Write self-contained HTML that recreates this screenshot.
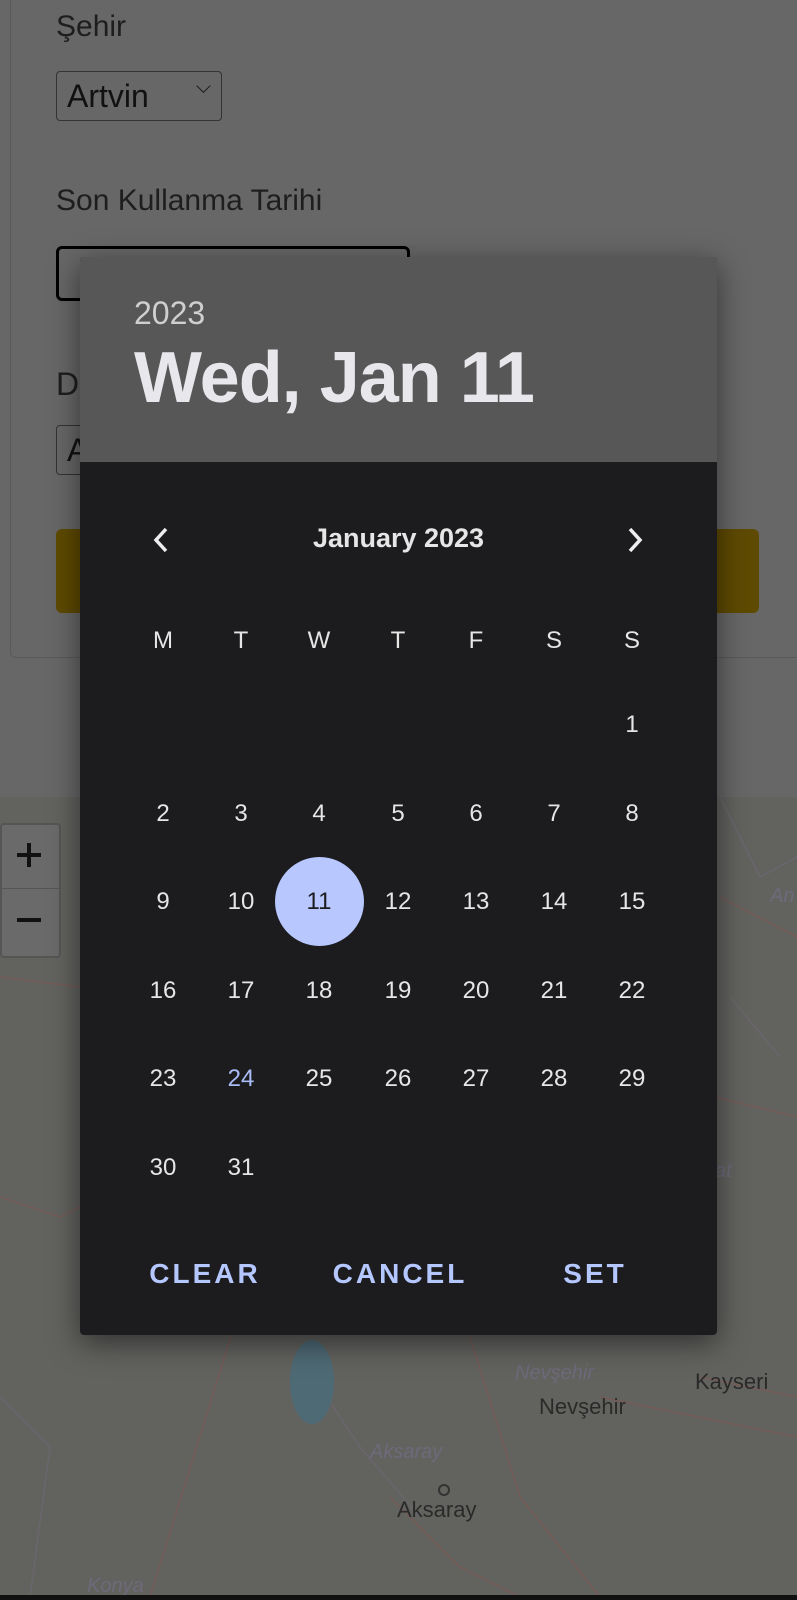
<!DOCTYPE html>
<html><head><meta charset="utf-8"><style>
*{margin:0;padding:0;box-sizing:border-box}
body{width:797px;height:1600px;overflow:hidden;background:#676767;font-family:"Liberation Sans",sans-serif;position:relative}
.a{position:absolute}
.t{color:#1e1e1e;font-size:30px}
.map{left:0;top:797px;width:797px;height:800px;background:#62625f;overflow:hidden}
.dlg{left:80px;top:257px;width:637px;height:1078px;background:#1c1c1e;border-radius:4px;box-shadow:0 8px 30px rgba(0,0,0,.5);overflow:hidden}
.hd{left:0;top:0;width:637px;height:205px;background:#575757}
.c{position:absolute;width:60px;margin-left:-30px;text-align:center;color:#e6e6e6;font-size:24px;margin-top:2px}
.btn{position:absolute;color:#b5c7ff;font-size:28px;font-weight:bold;letter-spacing:3px;transform:translateX(-50%)}
</style></head><body>
<div class="a" style="left:10px;top:-10px;width:800px;height:668px;border:1px solid #5a5a5a;border-radius:6px"></div>
<div class="a t" style="left:56px;top:10px">Şehir</div>
<div class="a" style="left:56px;top:71px;width:166px;height:50px;border:1.5px solid #333;border-radius:4px;font-size:32px;color:#111;padding:6px 10px">Artvin<span style="position:absolute;right:10px;top:4px;font-size:20px">⌵</span></div>
<div class="a t" style="left:56px;top:184px">Son Kullanma Tarihi</div>
<div class="a" style="left:56px;top:246px;width:354px;height:55px;border:3px solid #000;border-radius:6px"></div>
<div class="a t" style="left:56px;top:366px;font-size:32px">D</div>
<div class="a" style="left:56px;top:425px;width:60px;height:50px;border:1.5px solid #333;border-radius:4px;font-size:32px;color:#111;padding:6px 10px">A</div>
<div class="a" style="left:56px;top:529px;width:703px;height:84px;background:#5e4a00;border-radius:6px"></div>
<div class="a map">
<svg width="797" height="800" style="position:absolute;left:0;top:0">
<g fill="none" stroke="#7a5a55" stroke-width="1.5" opacity=".8">
<path d="M0 180 L80 190 L150 230 M0 400 L60 420 L120 390 M720 100 L797 140 M715 300 L797 320 M240 510 L150 800 M390 700 L460 770 L520 800 M470 540 L520 700 L600 800 M700 580 L797 600 M600 600 L797 640"/>
<path d="M720 0 L760 80 L797 60 M730 200 L780 260 M0 600 L50 650 L30 800 M300 560 L360 650 L420 720" stroke="#6d6870"/>
</g>
<ellipse cx="312" cy="585" rx="22" ry="42" fill="#4e6a75"/>
<g font-family="Liberation Sans" font-style="italic" fill="#6e6a7a" font-size="20">
<text x="515" y="582">Nevşehir</text><text x="370" y="661">Aksaray</text><text x="87" y="795">Konya</text><text x="770" y="105">An</text><text x="715" y="380">at</text></g>
<g font-family="Liberation Sans" fill="#2a2a2a" font-size="22">
<text x="539" y="617">Nevşehir</text><text x="695" y="592">Kayseri</text><text x="397" y="720">Aksaray</text></g>
<circle cx="444" cy="693" r="5" fill="none" stroke="#333" stroke-width="2"/>
</svg>
<div class="a" style="left:0;top:26px;width:61px;height:135px;background:#6a6a6a;border:2px solid #555;border-radius:4px"></div>
<div class="a" style="left:0;top:91px;width:60px;height:1px;background:#555"></div>
<svg class="a" style="left:16px;top:45px" width="26" height="26"><path d="M13 1V25M1 13H25" stroke="#111" stroke-width="4"/></svg>
<svg class="a" style="left:16px;top:110px" width="26" height="26"><path d="M1 13H25" stroke="#111" stroke-width="4"/></svg>
</div>
<div class="a" style="left:0;top:1595px;width:797px;height:5px;background:#111"></div>
<div class="a dlg">
<div class="a hd"></div>
<div class="a" style="left:54px;top:38px;font-size:32px;color:#cfcfcf">2023</div>
<div class="a" style="left:54px;top:80px;font-size:72px;font-weight:bold;color:#e8e8ec;letter-spacing:-1px">Wed, Jan 11</div>
<svg class="a" style="left:70px;top:268px" width="24" height="30"><path d="M16 4 L6 15 L16 26" stroke="#eee" stroke-width="3.5" fill="none"/></svg>
<svg class="a" style="left:542px;top:268px" width="24" height="30"><path d="M8 4 L18 15 L8 26" stroke="#eee" stroke-width="3.5" fill="none"/></svg>
<div class="a" style="left:0;width:637px;top:266px;text-align:center;font-size:27px;font-weight:bold;color:#e6e6e6">January 2023</div>
<div style="position:absolute;left:0;top:0">
<div class="c" style="left:83px;top:368px">M</div><div class="c" style="left:161px;top:368px">T</div><div class="c" style="left:239px;top:368px">W</div><div class="c" style="left:318px;top:368px">T</div><div class="c" style="left:396px;top:368px">F</div><div class="c" style="left:474px;top:368px">S</div><div class="c" style="left:552px;top:368px">S</div>
<div class="c" style="left:552px;top:452px">1</div>
<div class="c" style="left:83px;top:541px">2</div><div class="c" style="left:161px;top:541px">3</div><div class="c" style="left:239px;top:541px">4</div><div class="c" style="left:318px;top:541px">5</div><div class="c" style="left:396px;top:541px">6</div><div class="c" style="left:474px;top:541px">7</div><div class="c" style="left:552px;top:541px">8</div>
<div class="a" style="left:195px;top:600px;width:89px;height:89px;border-radius:50%;background:#b8c8ff"></div>
<div class="c" style="left:83px;top:629px">9</div><div class="c" style="left:161px;top:629px">10</div><div class="c" style="left:239px;top:629px;color:#1c1c1e">11</div><div class="c" style="left:318px;top:629px">12</div><div class="c" style="left:396px;top:629px">13</div><div class="c" style="left:474px;top:629px">14</div><div class="c" style="left:552px;top:629px">15</div>
<div class="c" style="left:83px;top:718px">16</div><div class="c" style="left:161px;top:718px">17</div><div class="c" style="left:239px;top:718px">18</div><div class="c" style="left:318px;top:718px">19</div><div class="c" style="left:396px;top:718px">20</div><div class="c" style="left:474px;top:718px">21</div><div class="c" style="left:552px;top:718px">22</div>
<div class="c" style="left:83px;top:806px">23</div><div class="c" style="left:161px;top:806px;color:#a9bcf5">24</div><div class="c" style="left:239px;top:806px">25</div><div class="c" style="left:318px;top:806px">26</div><div class="c" style="left:396px;top:806px">27</div><div class="c" style="left:474px;top:806px">28</div><div class="c" style="left:552px;top:806px">29</div>
<div class="c" style="left:83px;top:895px">30</div><div class="c" style="left:161px;top:895px">31</div>
</div>
<div class="btn" style="left:125px;top:1001px">CLEAR</div>
<div class="btn" style="left:320px;top:1001px">CANCEL</div>
<div class="btn" style="left:515px;top:1001px">SET</div>
</div>
</body></html>
